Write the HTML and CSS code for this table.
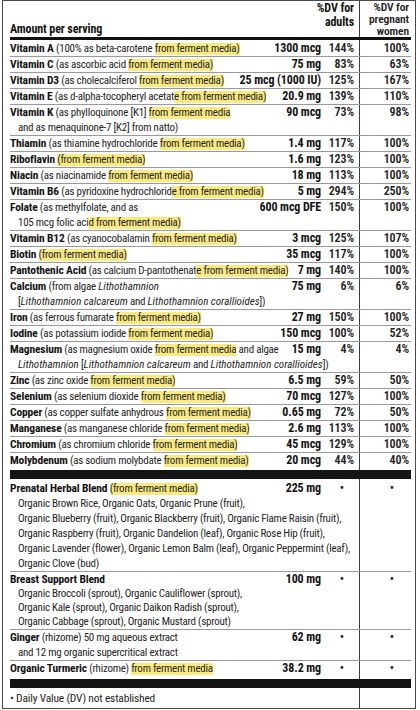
FILE: index.html
```html
<!DOCTYPE html>
<html lang="en">
<head>
<meta charset="utf-8">
<title>Supplement Facts</title>
<link rel="stylesheet" href="styles.css">
</head>
<body>
<div class="label">
  <div class="row head">
    <div class="name hd-amt">Amount per serving</div>
    <div class="hd-adult">%DV for<br>adults</div>
    <div class="dv2 hd-preg">%DV for<br>pregnant<br>women</div>
  </div>
  <div class="rule-thick"></div>

  <div class="row"><div class="name"><b>Vitamin A</b> (100% as beta-carotene <mark>from ferment media)</mark></div><div class="amt">1300 mcg</div><div class="dv">144%</div><div class="dv2">100%</div></div>
  <div class="row"><div class="name"><b>Vitamin C</b> (as ascorbic acid <mark>from ferment media)</mark></div><div class="amt">75 mg</div><div class="dv">83%</div><div class="dv2">63%</div></div>
  <div class="row"><div class="name"><b>Vitamin D3</b> (as cholecalciferol <mark>from ferment media)</mark></div><div class="amt">25 mcg (1000 IU)</div><div class="dv">125%</div><div class="dv2">167%</div></div>
  <div class="row"><div class="name"><b>Vitamin E</b> (as d-alpha-tocopheryl acetat<mark>e from ferment media)</mark></div><div class="amt">20.9 mg</div><div class="dv">139%</div><div class="dv2">110%</div></div>
  <div class="row"><div class="name"><div><b>Vitamin K</b> (as phylloquinone [K1] <mark>from ferment media</mark></div><div class="cont">and as menaquinone-7 [K2] from natto)</div></div><div class="amt">90 mcg</div><div class="dv">73%</div><div class="dv2">98%</div></div>
  <div class="row"><div class="name"><b>Thiamin</b> (as thiamine hydrochloride <mark>from ferment media)</mark></div><div class="amt">1.4 mg</div><div class="dv">117%</div><div class="dv2">100%</div></div>
  <div class="row"><div class="name"><b>Riboflavin</b> <mark>(from ferment media)</mark></div><div class="amt">1.6 mg</div><div class="dv">123%</div><div class="dv2">100%</div></div>
  <div class="row"><div class="name"><b>Niacin</b> (as niacinamide <mark>from ferment media)</mark></div><div class="amt">18 mg</div><div class="dv">113%</div><div class="dv2">100%</div></div>
  <div class="row"><div class="name"><b>Vitamin B6</b> (as pyridoxine hydrochlorid<mark>e from ferment media)</mark></div><div class="amt">5 mg</div><div class="dv">294%</div><div class="dv2">250%</div></div>
  <div class="row"><div class="name"><div><b>Folate</b> (as methylfolate, and as</div><div class="cont">105 mcg folic aci<mark>d from ferment media)</mark></div></div><div class="amt">600 mcg DFE</div><div class="dv">150%</div><div class="dv2">100%</div></div>
  <div class="row"><div class="name"><b>Vitamin B12</b> (as cyanocobalamin <mark>from ferment media)</mark></div><div class="amt">3 mcg</div><div class="dv">125%</div><div class="dv2">107%</div></div>
  <div class="row"><div class="name"><b>Biotin</b> <mark>(from ferment media)</mark></div><div class="amt">35 mcg</div><div class="dv">117%</div><div class="dv2">100%</div></div>
  <div class="row"><div class="name"><b>Pantothenic Acid</b> (as calcium D-pantothenat<mark>e from ferment media)</mark></div><div class="amt">7 mg</div><div class="dv">140%</div><div class="dv2">100%</div></div>
  <div class="row"><div class="name"><div><b>Calcium</b> (from algae <i>Lithothamnion</i></div><div class="cont">[<i>Lithothamnion calcareum</i> and <i>Lithothamnion corallioides</i>])</div></div><div class="amt">75 mg</div><div class="dv">6%</div><div class="dv2">6%</div></div>
  <div class="row"><div class="name"><b>Iron</b> (as ferrous fumarate <mark>from ferment media)</mark></div><div class="amt">27 mg</div><div class="dv">150%</div><div class="dv2">100%</div></div>
  <div class="row"><div class="name"><b>Iodine</b> (as potassium iodide <mark>from ferment media)</mark></div><div class="amt">150 mcg</div><div class="dv">100%</div><div class="dv2">52%</div></div>
  <div class="row"><div class="name"><div><b>Magnesium</b> (as magnesium oxide <mark>from ferment media</mark> and algae</div><div class="cont"><i>Lithothamnion</i> [<i>Lithothamnion calcareum</i> and <i>Lithothamnion corallioides</i>])</div></div><div class="amt">15 mg</div><div class="dv">4%</div><div class="dv2">4%</div></div>
  <div class="row"><div class="name"><b>Zinc</b> (as zinc oxide <mark>from ferment media)</mark></div><div class="amt">6.5 mg</div><div class="dv">59%</div><div class="dv2">50%</div></div>
  <div class="row"><div class="name"><b>Selenium</b> (as selenium dioxide <mark>from ferment media)</mark></div><div class="amt">70 mcg</div><div class="dv">127%</div><div class="dv2">100%</div></div>
  <div class="row"><div class="name"><b>Copper</b> (as copper sulfate anhydrous <mark>from ferment media)</mark></div><div class="amt">0.65 mg</div><div class="dv">72%</div><div class="dv2">50%</div></div>
  <div class="row"><div class="name"><b>Manganese</b> (as manganese chloride <mark>from ferment media)</mark></div><div class="amt">2.6 mg</div><div class="dv">113%</div><div class="dv2">100%</div></div>
  <div class="row"><div class="name"><b>Chromium</b> (as chromium chloride <mark>from ferment media)</mark></div><div class="amt">45 mcg</div><div class="dv">129%</div><div class="dv2">100%</div></div>
  <div class="row last"><div class="name"><b>Molybdenum</b> (as sodium molybdate <mark>from ferment media)</mark></div><div class="amt">20 mcg</div><div class="dv">44%</div><div class="dv2">40%</div></div>

  <div class="bar"></div>

  <div class="row blend"><div class="name"><div><b>Prenatal Herbal Blend</b> <mark>(from ferment media)</mark></div><div class="cont">Organic Brown Rice, Organic Oats, Organic Prune (fruit),</div><div class="cont">Organic Blueberry (fruit), Organic Blackberry (fruit), Organic Flame Raisin (fruit),</div><div class="cont">Organic Raspberry (fruit), Organic Dandelion (leaf), Organic Rose Hip (fruit),</div><div class="cont">Organic Lavender (flower), Organic Lemon Balm (leaf), Organic Peppermint (leaf),</div><div class="cont">Organic Clove (bud)</div></div><div class="amt">225 mg</div><div class="dv dot">•</div><div class="dv2 dot">•</div></div>
  <div class="row blend tight"><div class="name"><div><b>Breast Support Blend</b></div><div class="cont">Organic Broccoli (sprout), Organic Cauliflower (sprout),</div><div class="cont">Organic Kale (sprout), Organic Daikon Radish (sprout),</div><div class="cont">Organic Cabbage (sprout), Organic Mustard (sprout)</div></div><div class="amt">100 mg</div><div class="dv dot">•</div><div class="dv2 dot">•</div></div>
  <div class="row blend"><div class="name"><div><b>Ginger</b> (rhizome) 50 mg aqueous extract</div><div class="cont">and 12 mg organic supercritical extract</div></div><div class="amt">62 mg</div><div class="dv dot">•</div><div class="dv2 dot">•</div></div>
  <div class="row blend last"><div class="name"><b>Organic Turmeric</b> (rhizome) <mark>from ferment media</mark></div><div class="amt">38.2 mg</div><div class="dv dot">•</div><div class="dv2 dot">•</div></div>

  <div class="bar"></div>

  <div class="row foot"><div class="name">• Daily Value (DV) not established</div></div>
</div>
</body>
</html>
```

FILE: styles.css
```css
html, body {
  margin: 0;
  padding: 0;
  background: #fff;
}

.label {
  box-sizing: border-box;
  width: 414px;
  margin: 0 0 0 2px;
  padding: 0 4px 0 7px;
  border: 1px solid #4a4a4a;
  font-family: "Roboto Condensed", Roboto, "Liberation Sans", sans-serif;
  font-stretch: 75%;
  font-size: 11px;
  letter-spacing: -0.25px;
  line-height: 15px;
  color: #262626;
  background-image: linear-gradient(#3c3c3c, #3c3c3c);
  background-repeat: no-repeat;
  background-size: 1px 100%;
  background-position: 356px 0;
}

.row {
  display: grid;
  grid-template-columns: minmax(0, 1fr) auto 38px 52px;
  border-bottom: 1px solid #9a9a9a;
}

.row.last {
  border-bottom: none;
}

.name {
  white-space: nowrap;
  min-width: 0;
}

.name b {
  font-size: 11.5px;
  letter-spacing: -0.15px;
}

.name b,
.amt,
.hd-amt,
.hd-adult,
.hd-preg {
  font-weight: 700;
  color: #141414;
}

.amt,
.hd-amt,
.hd-adult,
.hd-preg {
  letter-spacing: -0.1px;
}

.cont {
  padding-left: 8px;
}

.amt {
  text-align: right;
  white-space: nowrap;
  padding-left: 6px;
  font-size: 12px;
}

.dv {
  text-align: right;
  padding-right: 5px;
  font-weight: 600;
  font-size: 12px;
  letter-spacing: -0.1px;
  color: #222;
}

.dv2 {
  text-align: right;
  padding-right: 2px;
  font-weight: 600;
  font-size: 12px;
  letter-spacing: -0.1px;
  color: #222;
}

.dot.dv {
  padding-right: 15px;
}

.dot.dv2 {
  padding-right: 17px;
}

mark {
  display: inline-block;
  line-height: 12px;
  background: #f8ea80;
  color: inherit;
}

i {
  font-style: italic;
  letter-spacing: 0;
}

.head {
  border-bottom: none;
  height: 36px;
  box-sizing: border-box;
}

.hd-amt {
  align-self: end;
  line-height: 14px;
  padding-bottom: 1px;
  font-size: 12px;
}

.hd-adult {
  grid-column: 2 / 4;
  text-align: right;
  padding-right: 5px;
  padding-top: 1px;
  line-height: 13.5px;
  font-size: 12px;
}

.hd-preg {
  grid-column: 4;
  line-height: 12px;
  font-size: 11.5px;
}

.rule-thick {
  height: 3px;
  margin-bottom: 1px;
  background: #111;
}

.bar {
  height: 9px;
  background: #141414;
  margin: 2px 0;
}

.tight {
  line-height: 14px;
}

.blend.last {
  padding-bottom: 1px;
}

.foot {
  border-bottom: none;
  padding: 1px 0 2px;
  font-size: 11.5px;
  letter-spacing: -0.2px;
}

.foot .name {
  grid-column: 1 / 4;
}
```
